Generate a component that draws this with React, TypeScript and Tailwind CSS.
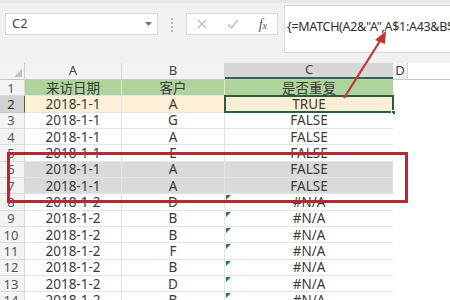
import React from "react";

type Row = {
  n: number;
  a: string;
  b: string;
  c: string;
  bg?: string;
  flag?: boolean;
};

const rows: Row[] = [
  { n: 1, a: "来访日期", b: "客户", c: "是否重复", bg: "bg-[#aed49b]" },
  { n: 2, a: "2018-1-1", b: "A", c: "TRUE", bg: "bg-[#fdf0d6]" },
  { n: 3, a: "2018-1-1", b: "G", c: "FALSE" },
  { n: 4, a: "2018-1-1", b: "A", c: "FALSE" },
  { n: 5, a: "2018-1-1", b: "E", c: "FALSE" },
  { n: 6, a: "2018-1-1", b: "A", c: "FALSE", bg: "bg-[#dadada]" },
  { n: 7, a: "2018-1-1", b: "A", c: "FALSE", bg: "bg-[#dadada]" },
  { n: 8, a: "2018-1-2", b: "D", c: "#N/A", flag: true },
  { n: 9, a: "2018-1-2", b: "B", c: "#N/A", flag: true },
  { n: 10, a: "2018-1-2", b: "B", c: "#N/A", flag: true },
  { n: 11, a: "2018-1-2", b: "F", c: "#N/A", flag: true },
  { n: 12, a: "2018-1-2", b: "B", c: "#N/A", flag: true },
  { n: 13, a: "2018-1-2", b: "D", c: "#N/A", flag: true },
  { n: 14, a: "2018-1-2", b: "B", c: "#N/A", flag: true },
];

const font = { fontFamily: '"Noto Sans", "Noto Sans CJK SC", sans-serif' };

function Toolbar() {
  return (
    <div className="flex h-[63px] items-start bg-[#f1f1f1] border-t-[3px] border-[#e6e6e6]">
      <div className="ml-[5px] mt-[10px] flex h-[22px] w-[153px] shrink-0 items-center justify-between border border-[#d9d9d9] bg-white pl-[6px] pr-[5px] text-[13px] text-[#444]">
        <span>C2</span>
        <svg width="7" height="4" viewBox="0 0 7 4">
          <path d="M0 0 L7 0 L3.5 4 Z" fill="#777" />
        </svg>
      </div>
      <div className="ml-[13px] mt-[15px] flex shrink-0 flex-col gap-[2px]">
        {[0, 1, 2, 3].map((i) => (
          <div key={i} className="h-[2px] w-[2px] bg-[#b5b5b5]" />
        ))}
      </div>
      <div className="ml-[13px] mt-[10px] flex h-[22px] w-[92px] shrink-0 items-center justify-around border border-[#d9d9d9] bg-white">
        <svg width="10" height="10" viewBox="0 0 10 10">
          <path d="M1 1 L9 9 M9 1 L1 9" stroke="#b8b8b8" strokeWidth="1.2" />
        </svg>
        <svg width="12" height="10" viewBox="0 0 12 10">
          <path d="M1 5.5 L4.5 9 L11 1" stroke="#b8b8b8" strokeWidth="1.3" fill="none" />
        </svg>
        <span className="text-[14px] italic text-[#555]" style={{ fontFamily: '"Liberation Serif", serif' }}>
          f<span className="text-[10px]">x</span>
        </span>
      </div>
      <div className="ml-[6px] mt-[2px] h-[48px] min-w-0 flex-1 overflow-hidden border border-r-0 border-[#d9d9d9] bg-white pl-[2px] pt-[7px]">
        <span className="whitespace-nowrap text-[12.5px] tracking-[-0.3px] text-[#2e2e2e]">
          {'{=MATCH(A2&"A",A$1:A43&B$1:B43,0)=ROW(A2)}'}
        </span>
      </div>
    </div>
  );
}

function ColumnHeaders() {
  return (
    <div className="flex h-[17px] border-b border-[#c9c9c9] text-[13px] text-[#444]">
      <div className="relative w-[25px] shrink-0 bg-[#f3f3f3] border-r border-[#cfcfcf]">
        <svg className="absolute right-[2px] bottom-[2px]" width="8" height="8" viewBox="0 0 8 8">
          <path d="M8 0 L8 8 L0 8 Z" fill="#c4c4c4" />
        </svg>
      </div>
      <div className="flex w-[97px] shrink-0 items-center justify-center border-r border-[#d6d6d6] bg-[#f3f3f3]">A</div>
      <div className="flex w-[103px] shrink-0 items-center justify-center border-r border-[#d6d6d6] bg-[#f3f3f3]">B</div>
      <div className="flex w-[168px] shrink-0 items-center justify-center border-b-2 border-[#2f6b47] bg-[#d6d6d6]">C</div>
      <div className="flex w-[15px] shrink-0 items-center justify-center border-r border-[#d6d6d6] bg-[#f3f3f3]">D</div>
      <div className="flex-1 bg-white" />
    </div>
  );
}

function DataRow({ row }: { row: Row }) {
  const isSel = row.n === 2;
  const bg = row.bg ?? "bg-white";
  return (
    <div className="flex h-[16.33px] text-[13.5px] leading-[16px] text-[#3a3a3a]">
      <div
        className={`flex w-[25px] shrink-0 items-center justify-center pr-[2px] border-r border-b text-[13px] ${
          isSel ? "bg-[#d2d2d2] border-r-[#2f6b47] border-b-[#c4c4c4] text-[#333]" : "bg-[#f3f3f3] border-[#d8d8d8] text-[#555]"
        }`}
      >
        {row.n}
      </div>
      <div className={`flex w-[97px] shrink-0 items-center justify-center border-r border-b border-[#e3e3e3] ${bg}`}>{row.a}</div>
      <div className={`flex w-[103px] shrink-0 items-center justify-center border-r border-b border-[#e3e3e3] ${bg}`}>{row.b}</div>
      <div className={`relative flex w-[168px] shrink-0 items-center justify-center border-b border-[#e3e3e3] ${bg}`}>
        {row.flag && (
          <svg className="absolute left-[1px] top-[1px]" width="5" height="5" viewBox="0 0 5 5">
            <path d="M0 0 L5 0 L0 5 Z" fill="#2f7a3a" />
          </svg>
        )}
        {row.c}
        {isSel && (
          <>
            <div className="absolute -left-[1px] -top-[1px] -bottom-[1px] -right-[1px] border-2 border-[#2b5f3c]" />
            <div className="absolute -right-[3px] -bottom-[3px] h-[5px] w-[5px] border border-white bg-[#2b5f3c]" />
          </>
        )}
      </div>
      <div className="flex-1 bg-white" />
    </div>
  );
}

export default function App() {
  return (
    <div className="relative h-[300px] w-[450px] overflow-hidden bg-white" style={font}>
      <Toolbar />
      <ColumnHeaders />
      {rows.map((r) => (
        <DataRow key={r.n} row={r} />
      ))}

      {/* highlight box */}
      <div className="absolute left-[7px] top-[152px] h-[51px] w-[401px] border-[3px] border-[#b52a30]" />

      {/* arrow */}
      <svg className="absolute left-0 top-0" width="450" height="300" viewBox="0 0 450 300">
        <line x1="344" y1="98" x2="380" y2="41" stroke="#c2333a" strokeWidth="2.2" />
        <path d="M386 31 L375 40 L385 44 Z" fill="#c2333a" />
      </svg>
    </div>
  );
}
